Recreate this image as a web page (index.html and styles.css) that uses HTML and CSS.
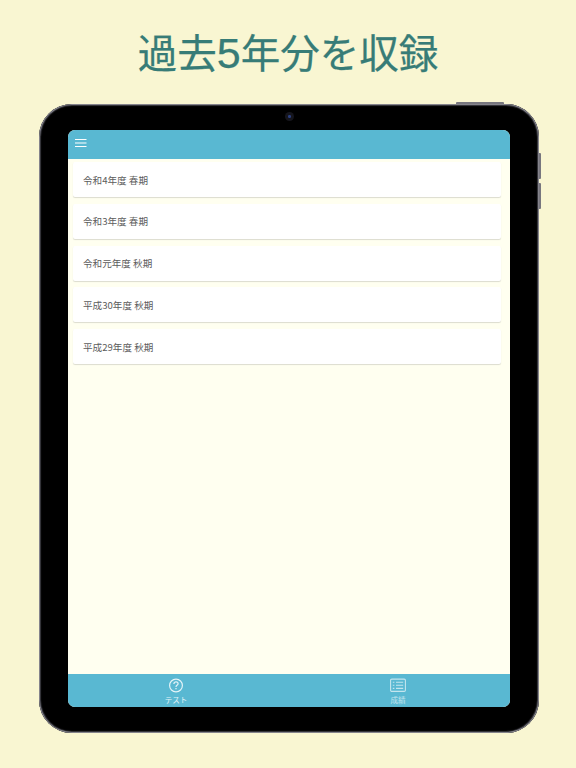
FILE: index.html
```html
<!DOCTYPE html>
<html lang="ja">
<head>
<meta charset="utf-8">
<title>過去5年分を収録</title>
<link rel="stylesheet" href="styles.css">
</head>
<body>
<h1 class="headline">過去<span class="digit">5</span>年分を収録</h1>
<div class="device">
  <span class="btn btn-top"></span>
  <span class="btn btn-vol1"></span>
  <span class="btn btn-vol2"></span>
  <span class="camera"></span>
  <div class="screen">
    <header class="appbar">
      <svg class="menu-icon" width="12" height="10" viewBox="0 0 12 10"><path d="M0 1.5h11.5M0 5h11.5M0 8.5h11.5" stroke="#fff" stroke-width="1.2" fill="none"/></svg>
    </header>
    <main class="list">
      <div class="card">令和4年度 春期</div>
      <div class="card">令和3年度 春期</div>
      <div class="card">令和元年度 秋期</div>
      <div class="card">平成30年度 秋期</div>
      <div class="card">平成29年度 秋期</div>
    </main>
    <nav class="tabbar">
      <div class="tab">
        <svg class="tab-icon" width="16" height="15" viewBox="0 0 16 15" fill="none" stroke="#e3f3f7"><circle cx="8" cy="7.5" r="6.4" stroke-width="1.2"/><path d="M5.9 5.9c0-1.2 1-2 2.1-2s2.1.8 2.1 1.9c0 1.6-2.1 1.5-2.1 3.1" stroke-width="1.2"/><path d="M8 9.9v1.3" stroke-width="1.2"/></svg>
        <span class="tab-label">テスト</span>
      </div>
      <div class="tab tab-right">
        <svg class="tab-icon" width="16" height="15" viewBox="0 0 16 15" fill="none" stroke="#c4e5ee"><rect x=".6" y="1.1" width="14.8" height="12.3" rx="1.2" stroke-width="1.1"/><path d="M2.8 4.2h1.6M2.8 7.3h1.6M2.8 10.4h1.6M6 4.2h7.2M6 7.3h7.2M6 10.4h7.2" stroke-width="1.1"/></svg>
        <span class="tab-label tab-label-dim">成績</span>
      </div>
    </nav>
  </div>
</div>
</body>
</html>
```

FILE: styles.css
```css
* { box-sizing: border-box; }
html, body { margin: 0; height: 100%; }
body {
  width: 576px;
  height: 768px;
  overflow: hidden;
  background: #f9f6d2;
  font-family: "Noto Sans CJK JP", sans-serif;
  padding-top: 27px;
}
.headline {
  margin: 0;
  height: 77px;
  line-height: 48px;
  text-align: center;
  font-weight: 400;
  font-size: 39.5px;
  color: #377c77;
  -webkit-text-stroke: .25px #377c77;
}
.digit {
  font-family: "Liberation Sans", sans-serif;
  font-size: 43px;
}
.device {
  position: relative;
  width: 500px;
  height: 629px;
  margin-left: 39px;
  padding: 26px 29px;
  background: #000;
  border-radius: 33px;
  box-shadow: inset 0 0 0 1px #85848c, inset 0 0 1px 2px #3a3a40;
}
.btn { position: absolute; background: #77767e; }
.btn-top { top: -2px; left: 417px; width: 48px; height: 2px; border-radius: 1px 1px 0 0; }
.btn-vol1 { top: 49px; right: -2px; width: 2px; height: 26px; border-radius: 0 1px 1px 0; }
.btn-vol2 { top: 79px; right: -2px; width: 2px; height: 26px; border-radius: 0 1px 1px 0; }
.camera {
  position: absolute;
  top: 8px;
  left: 246px;
  width: 9px;
  height: 9px;
  border-radius: 50%;
  background: radial-gradient(circle, #2a3f80 0 1.2px, #15151c 1.8px 100%);
}
.screen {
  display: flex;
  flex-direction: column;
  height: 577px;
  background: #fffff0;
  border-radius: 7px;
  overflow: hidden;
}
.appbar {
  flex: none;
  height: 29px;
  padding: 8px 7px;
  background: #59b8d2;
  display: flex;
  align-items: flex-start;
}
.menu-icon { display: block; }
.list {
  flex: 1;
  display: flex;
  flex-direction: column;
  gap: 6.75px;
  padding: 3px 9px 0 5px;
}
.card {
  flex: none;
  height: 35px;
  padding-left: 10px;
  display: flex;
  align-items: center;
  background: #fff;
  border-radius: 2px;
  box-shadow: 0 1px 1px rgba(0, 0, 0, .14);
  font-size: 9.6px;
  color: #5c5c5c;
}
.tabbar {
  flex: none;
  height: 33px;
  background: #59b8d2;
  display: grid;
  grid-template-columns: 216px 1fr;
}
.tab {
  display: flex;
  flex-direction: column;
  align-items: center;
  padding-top: 4px;
}
.tab-right { padding-left: 2px; }
.tab-icon { display: block; }
.tab-label {
  margin-top: 1px;
  font-size: 7.5px;
  line-height: 11px;
  color: #e3f3f7;
}
.tab-label-dim { color: #c4e5ee; }
```
